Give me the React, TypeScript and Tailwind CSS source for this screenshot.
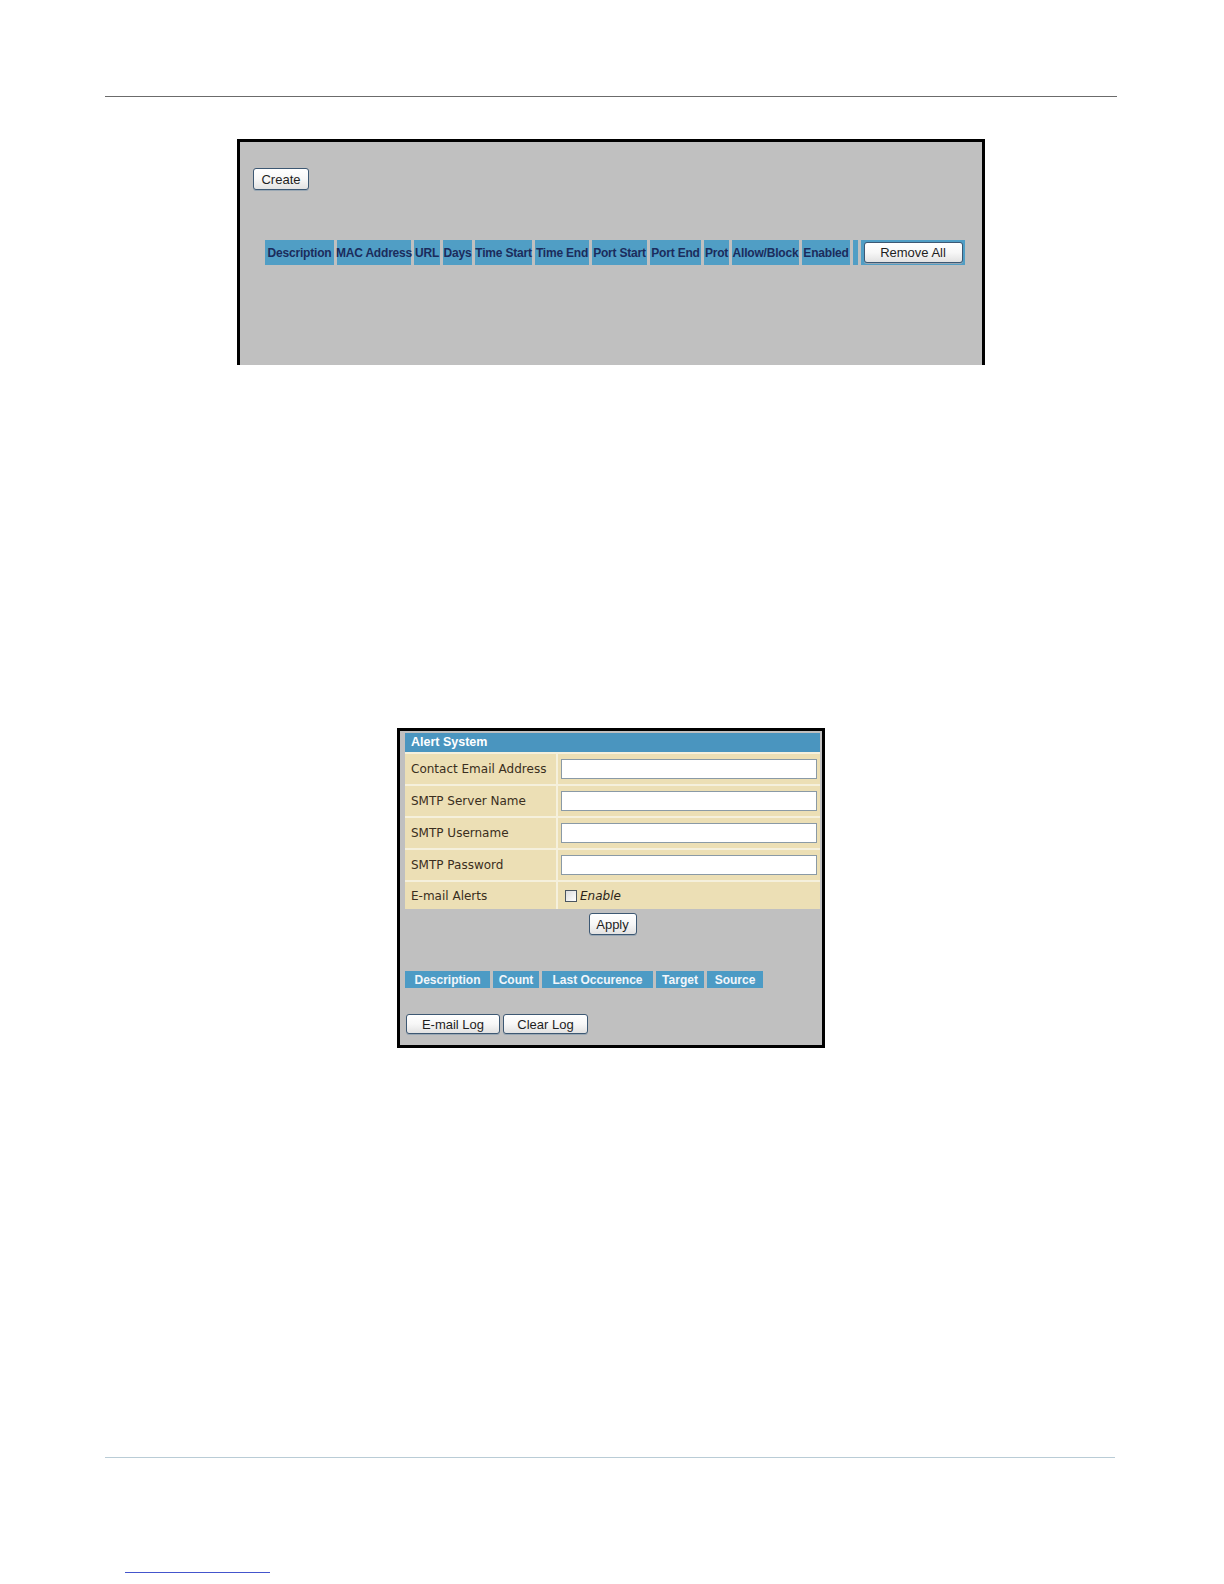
import React from "react";

// shared look of the old-style form buttons
function Btn({ children, className = "" }: { children: React.ReactNode; className?: string }) {
    return (
        <button
            type="button"
            className={`flex items-center justify-center rounded-[3px] border border-[#3d5873] bg-linear-to-b from-white via-[#f7f7f7] to-[#e2e2e2] text-[13px] leading-none text-[#1e1e1e] shadow-[0_1px_0_#9aa8b4] font-['Liberation_Sans',Arial,sans-serif] ${className}`}
        >
            {children}
        </button>
    );
}

const filterCols: { label: string; w: string }[] = [
    { label: "Description", w: "w-[69px]" },
    { label: "MAC Address", w: "w-[74px]" },
    { label: "URL", w: "w-[26px]" },
    { label: "Days", w: "w-[29px]" },
    { label: "Time Start", w: "w-[57px]" },
    { label: "Time End", w: "w-[54px]" },
    { label: "Port Start", w: "w-[55px]" },
    { label: "Port End", w: "w-[51px]" },
    { label: "Prot", w: "w-[25px]" },
    { label: "Allow/Block", w: "w-[67px]" },
    { label: "Enabled", w: "w-[48px]" },
];

const alertFields = ["Contact Email Address", "SMTP Server Name", "SMTP Username", "SMTP Password"];

const logCols: { label: string; w: string }[] = [
    { label: "Description", w: "w-[85px]" },
    { label: "Count", w: "w-[46px]" },
    { label: "Last Occurence", w: "w-[111px]" },
    { label: "Target", w: "w-[48px]" },
    { label: "Source", w: "w-[56px]" },
];

export default function App() {
    return (
        <div className="w-[1224px] h-[1584px] bg-white flex flex-col font-['Liberation_Sans',Arial,sans-serif]">
            {/* top rule */}
            <div className="mt-[96px] ml-[105px] w-[1012px] h-px bg-[#6b6b6b]" />

            {/* Filter panel (cut off at bottom) */}
            <div className="mt-[42px] ml-[237px] w-[748px] h-[226px] border-x-[3px] border-t-[3px] border-black bg-[#c0c0c0] pl-[13px] pt-[26px]">
                <Btn className="w-[56px] h-[22px]">Create</Btn>

                <div className="mt-[50px] ml-[12px] flex gap-[3px] h-[25px]">
                    {filterCols.map((c) => (
                        <div
                            key={c.label}
                            className={`${c.w} bg-[#509ec5] flex items-center justify-center whitespace-nowrap text-[12px] font-bold tracking-[-0.2px] text-[#1b2c5c]`}
                        >
                            {c.label}
                        </div>
                    ))}
                    <div className="w-[5px] bg-[#509ec5]" />
                    <div className="w-[104px] bg-[#509ec5] flex items-center justify-center">
                        <Btn className="w-[99px] h-[21px]">Remove All</Btn>
                    </div>
                </div>
            </div>

            {/* Alert System panel */}
            <div className="mt-[363px] ml-[397px] w-[428px] h-[320px] border-[3px] border-black bg-[#c0c0c0] pt-[2px] pl-[5px] pr-[2px] flex flex-col">
                <div className="flex flex-col gap-[2px] bg-[#f5f0dc]">
                    <div className="h-[19px] bg-[#4a95bf] pl-[6px] flex items-center text-[12.5px] font-bold text-white">
                        Alert System
                    </div>
                    {alertFields.map((f) => (
                        <div key={f} className="grid grid-cols-[151px_1fr] gap-[2px]">
                            <div className="h-[30px] bg-[#ecdfb5] pl-[6px] flex items-center text-[12px] text-[#3a2e20] font-['DejaVu_Sans',sans-serif] whitespace-nowrap">
                                {f}
                            </div>
                            <div className="h-[30px] bg-[#ecdfb5] px-[3px] flex items-center">
                                <input type="text" className="w-full h-[20px] border border-[#8a9aa6] bg-white outline-none" />
                            </div>
                        </div>
                    ))}
                    <div className="grid grid-cols-[151px_1fr] gap-[2px]">
                        <div className="h-[27px] bg-[#ecdfb5] pl-[6px] flex items-center text-[12px] text-[#3a2e20] font-['DejaVu_Sans',sans-serif]">
                            E-mail Alerts
                        </div>
                        <div className="h-[27px] bg-[#ecdfb5] pl-[7px] flex items-center">
                            <span className="w-[12px] h-[12px] border border-[#4a5560] bg-linear-to-br from-[#dcdcdc] to-white" />
                            <span className="ml-[3px] text-[12px] italic text-[#2b2418] font-['DejaVu_Sans',sans-serif]">Enable</span>
                        </div>
                    </div>
                </div>

                <div className="mt-[4px] flex justify-center">
                    <Btn className="w-[48px] h-[22px]">Apply</Btn>
                </div>

                {/* log table */}
                <div className="mt-[36px] flex gap-[3px] h-[17px]">
                    {logCols.map((c) => (
                        <div
                            key={c.label}
                            className={`${c.w} bg-[#4c9bc5] flex items-center justify-center whitespace-nowrap text-[12px] font-bold text-[#f2f6fa]`}
                        >
                            {c.label}
                        </div>
                    ))}
                </div>

                <div className="mt-[26px] flex gap-[3px] pl-px">
                    <Btn className="w-[94px] h-[20px]">E-mail Log</Btn>
                    <Btn className="w-[85px] h-[20px]">Clear Log</Btn>
                </div>
            </div>

            {/* footer rule */}
            <div className="mt-[409px] ml-[105px] w-[1010px] h-px bg-[#b9ccd6]" />
            <div className="mt-[114px] ml-[125px] w-[145px] h-px bg-[#4455cc]" />
        </div>
    );
}
